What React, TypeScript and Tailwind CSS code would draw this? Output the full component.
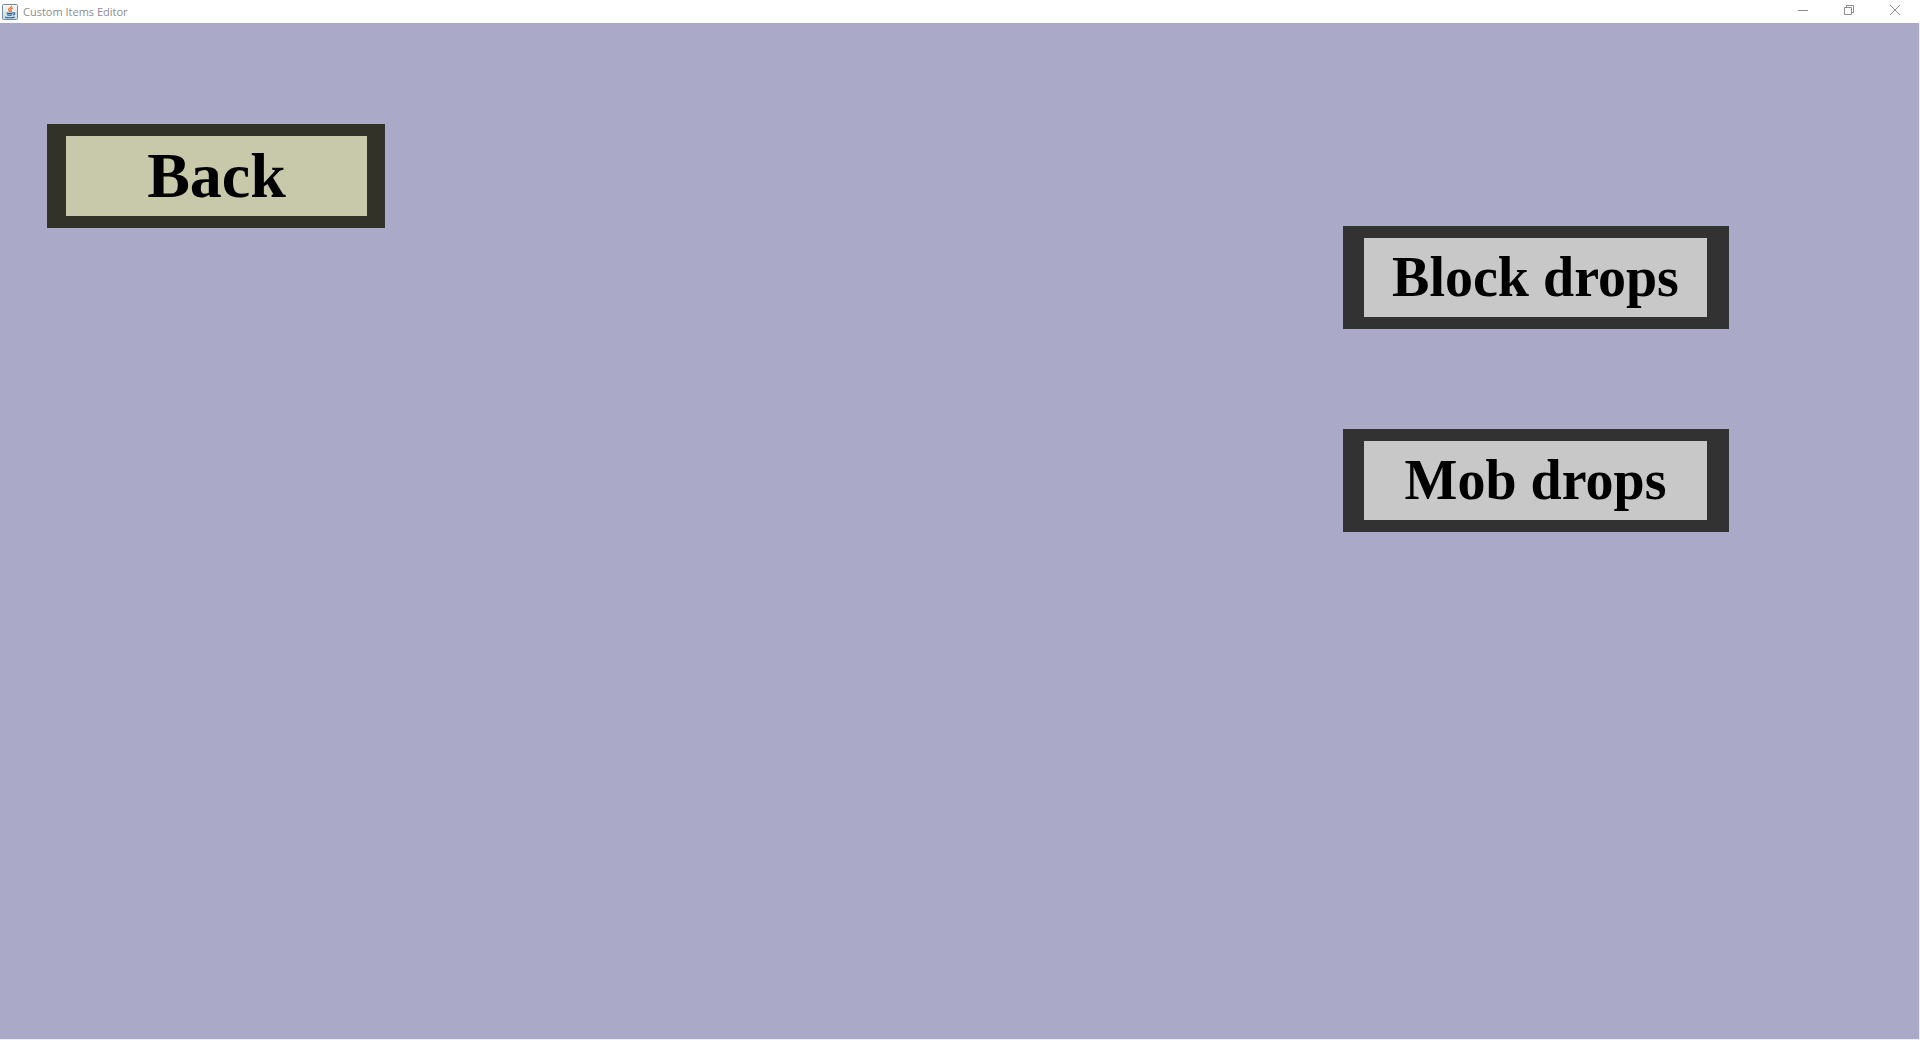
import React from "react";

function JavaIcon() {
  return (
    <svg width="16" height="16" viewBox="0 0 16 16" fill="none" aria-hidden="true">
      <defs>
        <linearGradient id="tile" x1="0" y1="0" x2="0" y2="1">
          <stop offset="0" stopColor="#fafafa" />
          <stop offset="1" stopColor="#c9d8e4" />
        </linearGradient>
      </defs>
      <rect x="0.5" y="0.5" width="15" height="15" rx="1" fill="url(#tile)" stroke="#6f8ca2" />
      <path d="M9.600 1.800c.5 1.700-3.400 2.500-3 4 .2.900 1.300 1.300 1.300 2.400M11 4c-2 .6-2.700 1.500-2 2.400.5.700.2 1.300-.3 1.700" stroke="#ee7420" strokeWidth="1.300" />
      <path d="M4.500 8.900c1.800.6 4.600.6 6.300 0M5 10.700c1.600.6 3.700.6 5.200 0M11 8.900c2.200-.7 2.400 1.200.2 2.200M3 12.900c2 1.200 7.800 1.100 9.700 0" stroke="#2f6690" strokeWidth="1.200" />
    </svg>
  );
}

function WindowButton({ label, children }: { label: string; children: React.ReactNode }) {
  return (
    <button type="button" aria-label={label} className="flex h-5 w-[46px] items-center justify-center">
      <svg width="10" height="10" viewBox="0 0 10 10" fill="none" stroke="#8c8c8c" aria-hidden="true">
        {children}
      </svg>
    </button>
  );
}

function MenuButton({ label, className }: { label: string; className: string }) {
  return (
    <button
      type="button"
      className={"border-y-12 text-center font-['Liberation_Serif',serif] font-bold whitespace-nowrap text-black " + className}
    >
      {label}
    </button>
  );
}

export default function App() {
  return (
    <div className="flex min-h-screen flex-col bg-white">
      <header className="flex h-[23px] items-center justify-between">
        <div className="flex items-center gap-[5px] pl-0.5">
          <JavaIcon />
          <h1 className="font-['Open_Sans',sans-serif] text-[11px] leading-5 text-[#8c8c8c]">Custom Items Editor</h1>
        </div>
        <div className="flex self-start pr-0.5">
          <WindowButton label="Minimize">
            <path d="M0 5.500h10" />
          </WindowButton>
          <WindowButton label="Restore">
            <path d="M0.500 2.500h7v7h-7zM2.500 2.500v-2h7v7h-2" />
          </WindowButton>
          <WindowButton label="Close">
            <path d="M0 0l10 10M10 0L0 10" />
          </WindowButton>
        </div>
      </header>
      <main className="flex grow items-start justify-between border-r border-b border-[#eeeef5] bg-[#aaaac8] pr-[190px] pl-[47px]">
        <MenuButton
          label="Back"
          className="mt-[101px] basis-[338px] border-r-18 border-l-19 border-[#323228] bg-[#c8c8aa] text-[64px] leading-[80px]"
        />
        <div className="mt-[203px] flex basis-[386px] flex-col gap-[100px]">
          <MenuButton label="Block drops" className="border-r-22 border-l-21 border-[#323232] bg-[#c8c8c8] text-[56px] leading-[79px]" />
          <MenuButton label="Mob drops" className="border-r-22 border-l-21 border-[#323232] bg-[#c8c8c8] text-[56px] leading-[79px]" />
        </div>
      </main>
    </div>
  );
}
